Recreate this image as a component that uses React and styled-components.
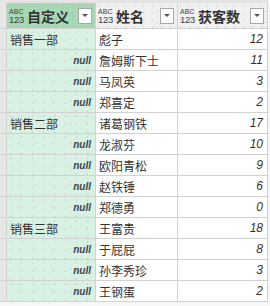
import React from "react";
import styled, { createGlobalStyle } from "styled-components";

const Global = createGlobalStyle`
  html, body { margin: 0; padding: 0; background: #f7f7f7; }
  body { font-family: "Noto Sans CJK SC", "Noto Sans", sans-serif; color: #333; }
`;

const speckle = `
  radial-gradient(circle at 30% 40%, rgba(150,150,170,0.35) 0.6px, transparent 0.9px),
  radial-gradient(circle at 70% 75%, rgba(170,150,160,0.3) 0.6px, transparent 0.9px)
`;

const Page = styled.div`
  width: 270px;
  height: 306px;
  overflow: hidden;
  background: #f7f7f7;
`;

const TopStrip = styled.div`
  height: 3px;
  width: 268px;
  background: #e4e4e4;
`;

const Grid = styled.div`
  display: grid;
  grid-template-columns: 6px 88px 81px 89px;
  grid-template-rows: 25px;
  grid-auto-rows: 20px;
  gap: 1px;
  width: 267px;
  background: #d2d2d2;
  border-right: 1px solid #d2d2d2;
  border-bottom: 1px solid #d2d2d2;
`;

const RowNum = styled.div`
  background: #e6e6e6;
`;

const Head = styled.div`
  display: flex;
  align-items: center;
  padding: 0 3px 0 2px;
  background-color: ${p => (p.$active ? "#a6d8b6" : "#f0f0f0")};
  background-image: ${speckle};
  background-size: 9px 7px, 13px 11px;
`;

const TypeIcon = styled.div`
  display: flex;
  flex-direction: column;
  align-items: flex-start;
  font-family: "Liberation Sans", Arial, sans-serif;
  color: #444;
  line-height: 1;
  width: 14px;
  margin-right: 4px;
  margin-top: 1px;
`;

const Abc = styled.span`
  font-size: 7px;
  letter-spacing: 0.1px;
`;

const Num = styled.span`
  font-size: 9.5px;
  letter-spacing: -0.3px;
  margin-top: 0px;
`;

const HeadText = styled.div`
  flex: 1;
  font-size: 14px;
  font-weight: 700;
  color: #333;
  white-space: nowrap;
  overflow: hidden;
`;

const Drop = styled.div`
  width: 12px;
  height: 14px;
  border: 1px solid #a8a8a8;
  background: #fff;
  display: flex;
  align-items: center;
  justify-content: center;
  flex-shrink: 0;
`;

const Tri = styled.div`
  width: 0;
  height: 0;
  border-left: 3px solid transparent;
  border-right: 3px solid transparent;
  border-top: 3px solid #555;
`;

const Cell = styled.div`
  display: flex;
  align-items: center;
  justify-content: ${p => (p.$right ? "flex-end" : "flex-start")};
  padding: 0 4px 0 3px;
  background-color: ${p => (p.$green ? "#d8f1e2" : "#fff")};
  background-image: ${p => (p.$green ? speckle : "none")};
  background-size: 11px 8px, 17px 13px;
  font-size: 12px;
  white-space: nowrap;
  overflow: hidden;
  color: #333;
`;

const Null = styled.span`
  font-family: "Liberation Sans", Arial, sans-serif;
  font-style: italic;
  font-weight: 700;
  font-size: 10px;
  color: #3e4450;
`;

const Value = styled.span`
  font-family: "Liberation Sans", Arial, sans-serif;
  font-style: italic;
  font-size: 12px;
  color: #333;
`;

const rows = [
  ["销售一部", "彪子", 12],
  [null, "詹姆斯下士", 11],
  [null, "马凤英", 3],
  [null, "郑喜定", 2],
  ["销售二部", "诸葛钢铁", 17],
  [null, "龙淑芬", 10],
  [null, "欧阳青松", 9],
  [null, "赵铁锤", 6],
  [null, "郑德勇", 0],
  ["销售三部", "王富贵", 18],
  [null, "于屁屁", 8],
  [null, "孙李秀珍", 3],
  [null, "王钢蛋", 2],
];

const Header = ({ label, active }) => (
  <Head $active={active}>
    <TypeIcon>
      <Abc>ABC</Abc>
      <Num>123</Num>
    </TypeIcon>
    <HeadText>{label}</HeadText>
    <Drop>
      <Tri />
    </Drop>
  </Head>
);

export default function App() {
  return (
    <Page>
      <Global />
      <TopStrip />
      <Grid>
        <RowNum />
        <Header label="自定义" active />
        <Header label="姓名" />
        <Header label="获客数" />
        {rows.map(([dept, name, n], i) => (
          <React.Fragment key={i}>
            <RowNum />
            <Cell $green $right={dept === null}>
              {dept === null ? <Null>null</Null> : dept}
            </Cell>
            <Cell>{name}</Cell>
            <Cell $right>
              <Value>{n}</Value>
            </Cell>
          </React.Fragment>
        ))}
      </Grid>
    </Page>
  );
}
